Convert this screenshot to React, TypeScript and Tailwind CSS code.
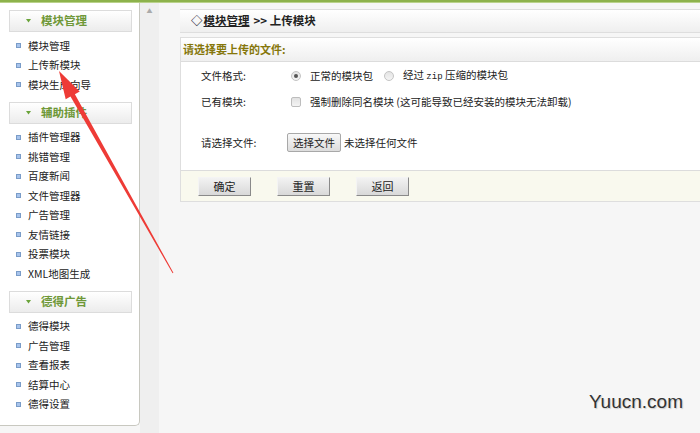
const font = { fontFamily: "'Noto Sans CJK SC', 'Liberation Sans', sans-serif" };

const groups = [
  { title: "模块管理", items: ["模块管理", "上传新模块", "模块生成向导"] },
  {
    title: "辅助插件",
    items: ["插件管理器", "挑错管理", "百度新闻", "文件管理器", "广告管理", "友情链接", "投票模块", "XML地图生成"],
  },
  { title: "德得广告", items: ["德得模块", "广告管理", "查看报表", "结算中心", "德得设置"] },
];

const Sidebar = () => (
  <div className="w-[140px] h-[423px] shrink-0 bg-white border-r border-b border-[#c8c8c0] rounded-br-[5px] pt-[7px]">
    {groups.map((g) => (
      <div key={g.title} className="pb-[7px]">
        {/* GROUP HEADER */}
        <div className="ml-[9px] w-[123px] h-[22px] flex items-center border border-[#dcdcdc] bg-gradient-to-b from-white to-[#ececec]">
          <svg className="ml-[16px]" width="5" height="4" viewBox="0 0 5 4">
            <polygon points="0,0 5,0 2.5,3.5" fill="#6aa43a" />
          </svg>
          <span className="ml-[10px] text-[11.5px] font-bold text-[#6f9838]">{g.title}</span>
        </div>
        {/* ITEMS */}
        <div className="pt-[4px]">
          {g.items.map((it) => (
            <div key={it} className="h-[19.5px] flex items-center pl-[16px]">
              <span className="w-[5px] h-[5px] border border-[#7a9cc8] bg-[#a8c4ec]" />
              <span className="ml-[7px] text-[10.5px] text-[#222]">{it}</span>
            </div>
          ))}
        </div>
      </div>
    ))}
  </div>
);

const Radio = ({ on }: { on?: boolean }) => (
  <span className="w-[10px] h-[10px] rounded-full border border-[#c4c4c4] bg-gradient-to-b from-[#e4e4e4] to-[#f4f4f4] flex items-center justify-center">
    {on && <span className="w-[4px] h-[4px] rounded-full bg-[#555]" />}
  </span>
);

const OldButton = ({ label }: { label: string }) => (
  <button className="w-[53px] h-[19px] text-[11px] text-[#222] bg-gradient-to-b from-[#f2f2f2] to-[#d9d9d9] border border-t-[#f4f4f4] border-l-[#f4f4f4] border-r-[#8a8a8a] border-b-[#8a8a8a]">
    {label}
  </button>
);

export default function App() {
  return (
    <div className="relative w-[700px] h-[433px] overflow-hidden bg-[#f6f6f6]" style={font}>
      {/* TOP BAR */}
      <div className="h-[3px] bg-[#8db24c] border-b border-[#b9d28a]" />
      <div className="flex">
        <Sidebar />
        {/* SCROLL STRIP */}
        <div className="w-[19px] h-[430px] bg-[#efefef] flex justify-center pt-[5px]">
          <span className="text-[6px] text-[#aaa] leading-none">▲</span>
        </div>
        {/* MAIN */}
        <div className="flex-1 pl-[21px] pt-[6px]">
          {/* BREADCRUMB */}
          <div className="h-[24px] border-t border-b border-[#dedede] bg-gradient-to-b from-white to-[#efefef] flex items-center pl-[11px] text-[11.5px] font-bold text-[#222]">
            <span className="text-[#223] mr-[1px]">◇</span>
            <span className="underline">模块管理</span>
            <span className="ml-[4px]">&gt;&gt; 上传模块</span>
          </div>
          {/* FORM PANEL */}
          <div className="mt-[4px] border-t border-b border-l border-[#dedede] bg-white">
            <div className="h-[24px] flex items-center pl-[2px] bg-gradient-to-b from-white to-[#efefef] border-b border-[#dcdcdc] text-[11px] font-bold text-[#85760a]">
              请选择要上传的文件:
            </div>
            <div className="pt-[1px] pb-[14px] text-[10.5px] text-[#222]">
              <div className="h-[26px] flex items-center">
                <span className="w-[110px] pl-[20px]">文件格式:</span>
                <Radio on />
                <span className="ml-[9px]">正常的模块包</span>
                <span className="ml-[11px]">
                  <Radio />
                </span>
                <span className="ml-[9px]">
                  经过 <span className="text-[9px]" style={{ fontFamily: "'Liberation Mono', monospace" }}>zip</span> 压缩的模块包
                </span>
              </div>
              <div className="h-[26px] flex items-center">
                <span className="w-[110px] pl-[20px]">已有模块:</span>
                <span className="w-[10px] h-[10px] rounded-[2px] border border-[#bdbdbd] bg-gradient-to-b from-[#e2e2e2] to-[#f4f4f4]" />
                <span className="ml-[9px]">强制删除同名模块 (这可能导致已经安装的模块无法卸载)</span>
              </div>
              <div className="h-[14px]" />
              <div className="h-[27px] flex items-center">
                <span className="w-[106px] pl-[20px]">请选择文件:</span>
                <button className="h-[19px] px-[5px] border border-[#a8a8a8] rounded-[2px] bg-gradient-to-b from-[#f8f8f8] to-[#dddddd] text-[10.5px] text-[#222]">
                  选择文件
                </button>
                <span className="ml-[3px]">未选择任何文件</span>
              </div>
            </div>
            {/* FOOTER */}
            <div className="h-[31px] flex items-center gap-[26px] pl-[17px] bg-[#f9f9ee] border-t border-[#dcdcdc]">
              <OldButton label="确定" />
              <OldButton label="重置" />
              <OldButton label="返回" />
            </div>
          </div>
        </div>
      </div>

      {/* RED ANNOTATION ARROW */}
      <svg className="absolute left-0 top-0 pointer-events-none" width="700" height="433">
        <polygon
          points="59,71 79.7,91.5 74.9,94.2 173.4,272.8 172.6,273.2 70.5,96.6 65.7,99.3"
          fill="#ee3b36"
        />
      </svg>

      {/* WATERMARK */}
      <div
        className="absolute left-[589px] top-[388px] text-[19px] text-[#333]"
        style={{ fontFamily: "'Liberation Sans', Arial, sans-serif", textShadow: "1px 1px 1px #ccc" }}
      >
        Yuucn.com
      </div>
    </div>
  );
}
